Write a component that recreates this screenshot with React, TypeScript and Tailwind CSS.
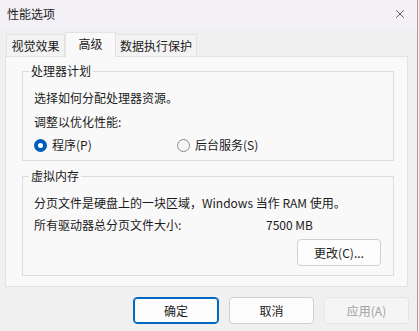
import { X } from 'lucide-react';

const font = { fontFamily: '"Noto Sans CJK SC", "Noto Sans", sans-serif' };

function Radio({ checked, label, className }: { checked?: boolean; label: string; className?: string }) {
  return (
    <label className={`flex items-center gap-[5px] ${className ?? ''}`}>
      {checked ? (
        <span className="flex h-[13px] w-[13px] items-center justify-center rounded-full bg-[#005fb8]">
          <span className="h-[5px] w-[5px] rounded-full bg-white" />
        </span>
      ) : (
        <span className="h-[13px] w-[13px] rounded-full border border-[#8a8a8a] bg-[#f6f6f6]" />
      )}
      <span>{label}</span>
    </label>
  );
}

function Group({ title, className, children }: { title: string; className?: string; children: React.ReactNode }) {
  return (
    <div className={`relative w-[372px] border border-[#dcdcdc] ${className ?? ''}`}>
      <span className="absolute -top-[10px] left-[6px] bg-[#f9f9f9] px-[2px] leading-[18px]">{title}</span>
      {children}
    </div>
  );
}

export default function App() {
  return (
    <div className="h-[331px] w-[419px] bg-[#f0f0f0] text-[12px] text-[#1b1b1b]" style={font}>
      <div className="flex h-[331px] w-[418px] flex-col border-r border-[#a3a3a3]">
        <header className="flex h-[28px] shrink-0 items-center justify-between bg-[#f3f0f6] pl-[7px] pr-[10px]">
          <span className="text-[12px]">性能选项</span>
          <X size={14} strokeWidth={1.2} className="text-[#1b1b1b]" />
        </header>

        <div className="ml-[6px] mt-[4px] flex h-[24px] items-end">
          <div className="flex h-[22px] w-[59px] items-center justify-center border border-b-0 border-[#e3e3e3] bg-[#f3f3f3] pt-[1px]">
            视觉效果
          </div>
          <div className="relative z-10 -mb-px flex h-[25px] w-[51px] items-center justify-center border border-b-0 border-[#e3e3e3] bg-[#f9f9f9] pb-[2px]">
            高级
          </div>
          <div className="flex h-[22px] w-[81px] items-center justify-center border border-b-0 border-l-0 border-[#e3e3e3] bg-[#f3f3f3] pt-[1px]">
            数据执行保护
          </div>
        </div>

        <div className="ml-[5px] h-[231px] w-[403px] border border-[#e3e3e3] bg-[#f9f9f9] pl-[16px] pt-[14px]">
          <Group title="处理器计划" className="h-[90px]">
            <div className="flex flex-col pl-[11px] pt-[14px]">
              <div className="flex h-[24px] items-center">选择如何分配处理器资源。</div>
              <div className="flex h-[24px] items-center">调整以优化性能:</div>
              <div className="flex h-[22px] items-center">
                <Radio checked label="程序(P)" className="w-[143px]" />
                <Radio label="后台服务(S)" />
              </div>
            </div>
          </Group>

          <Group title="虚拟内存" className="mt-[15px] h-[100px]">
            <div className="flex flex-col pl-[11px] pr-[12px] pt-[14px]">
              <div className="flex h-[24px] items-center">分页文件是硬盘上的一块区域，Windows 当作 RAM 使用。</div>
              <div className="flex h-[20px] items-center">
                <span className="w-[232px]">所有驱动器总分页文件大小:</span>
                <span>7500 MB</span>
              </div>
              <div className="mt-[4px] flex justify-end">
                <button
                  type="button"
                  className="h-[27px] w-[84px] rounded-[4px] border border-[#d0d0d0] bg-[#fdfdfd]"
                >
                  更改(C)...
                </button>
              </div>
            </div>
          </Group>
        </div>

        <footer className="mt-[10px] flex justify-end gap-[10px] pr-[8px]">
          <button
            type="button"
            className="h-[27px] w-[86px] rounded-[4px] border border-[#0067c0] bg-[#fdfdfd] shadow-[inset_0_0_0_1px_#0067c0]"
          >
            确定
          </button>
          <button
            type="button"
            className="h-[27px] w-[85px] rounded-[4px] border border-[#d0d0d0] bg-[#fdfdfd]"
          >
            取消
          </button>
          <button
            type="button"
            disabled
            className="h-[27px] w-[85px] rounded-[4px] border border-[#e6e6e6] bg-[#f5f5f5] text-[#a0a0a0]"
          >
            应用(A)
          </button>
        </footer>
      </div>
    </div>
  );
}
